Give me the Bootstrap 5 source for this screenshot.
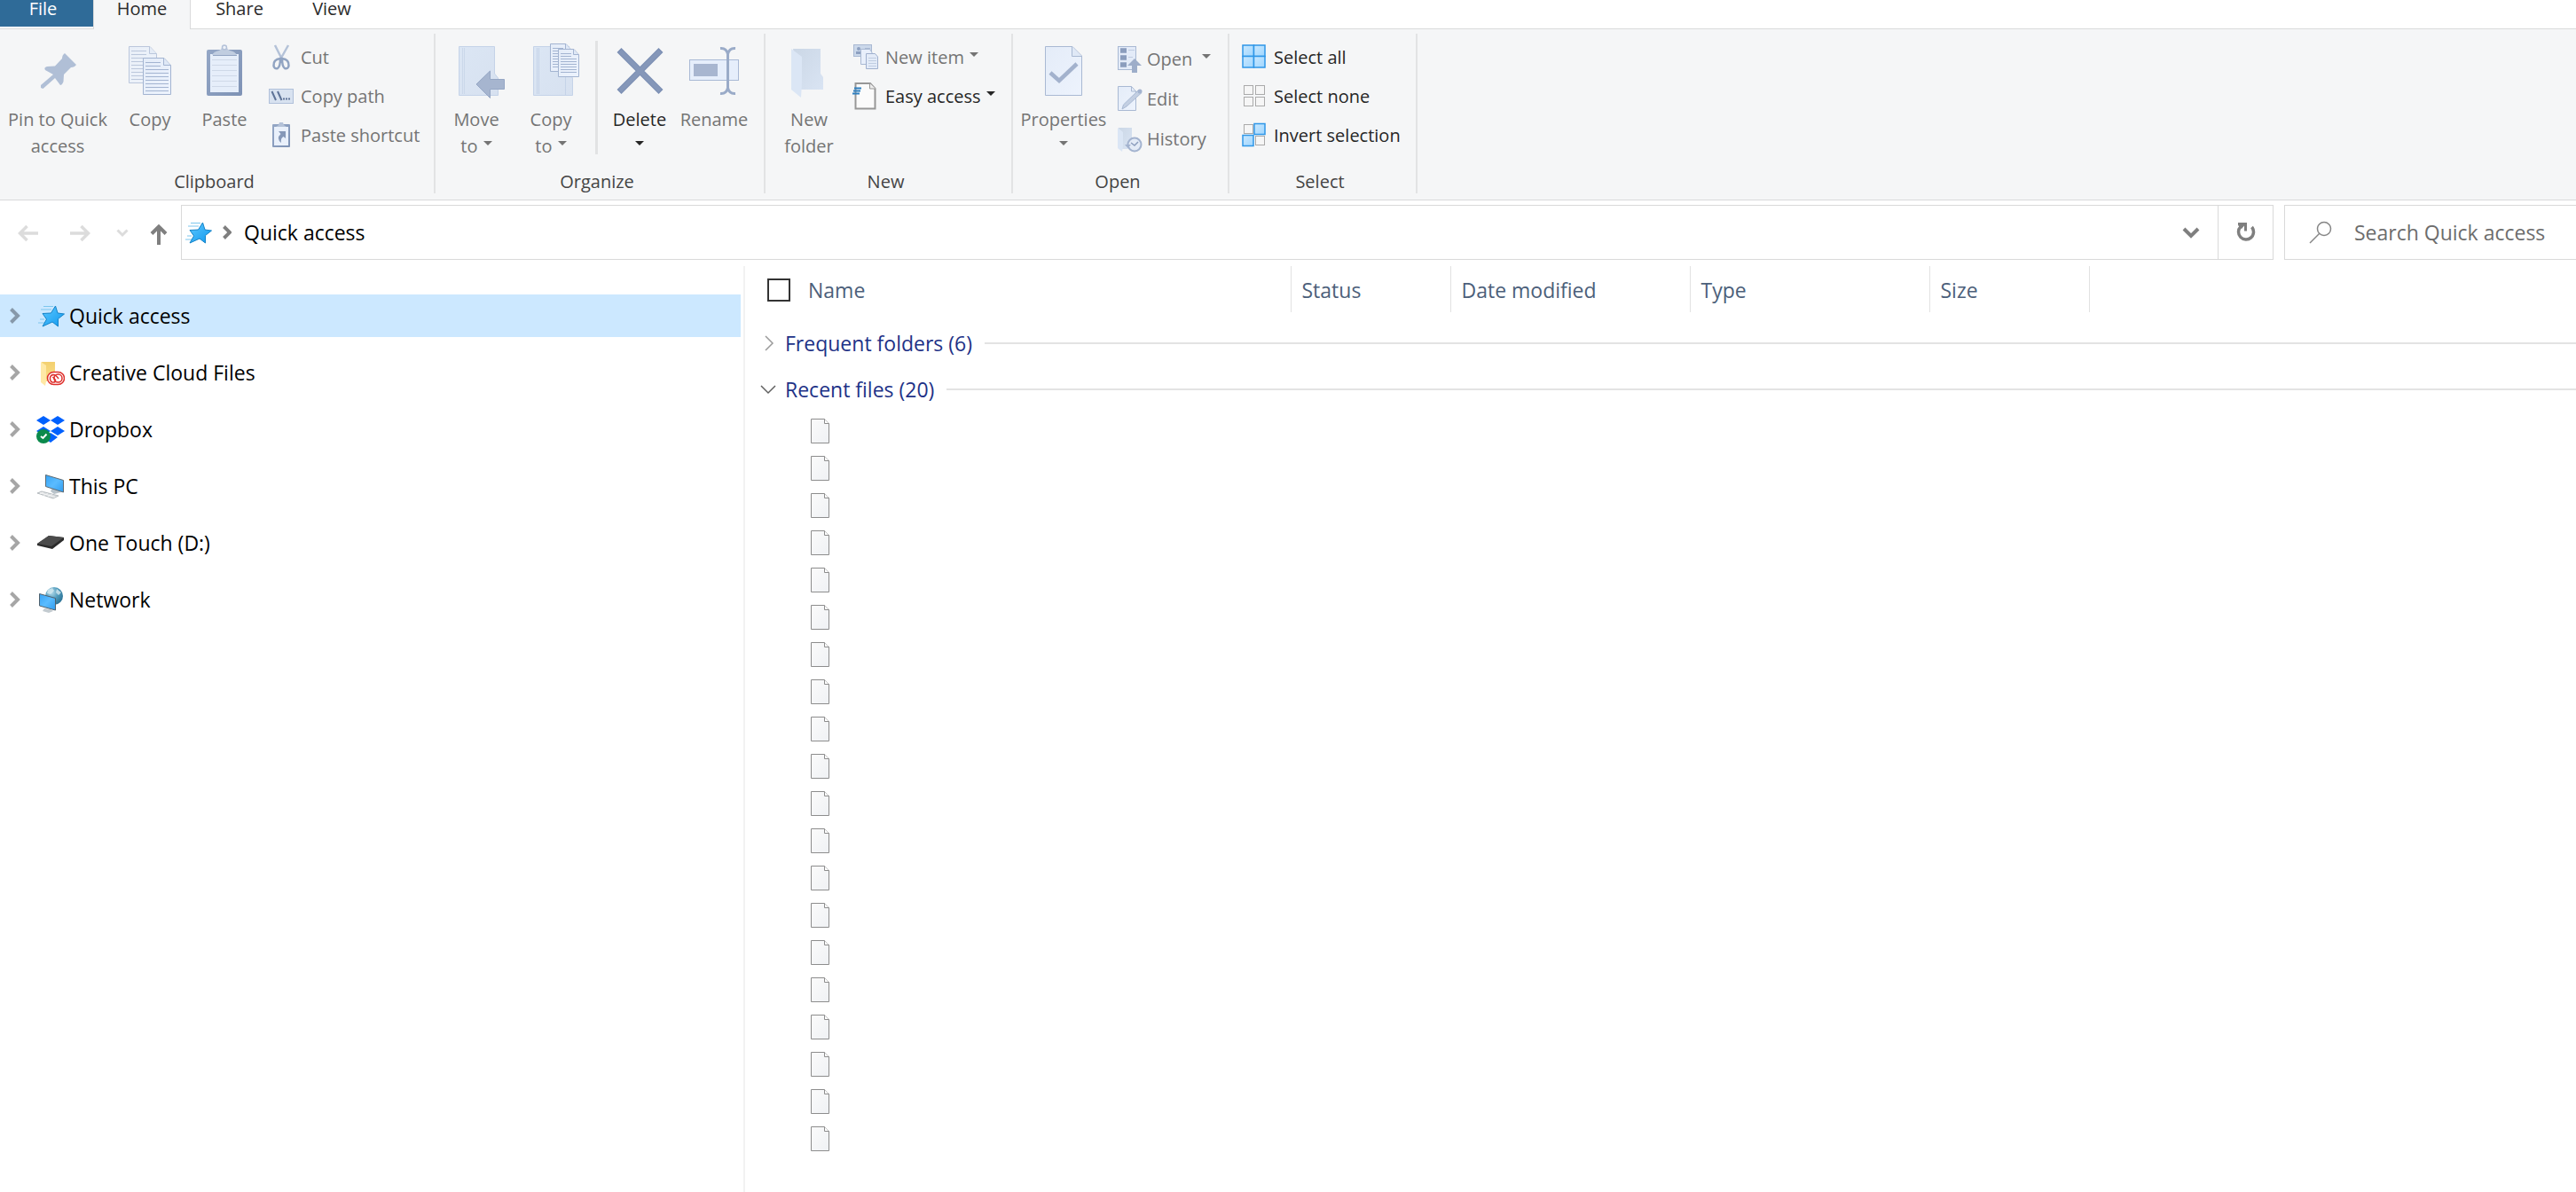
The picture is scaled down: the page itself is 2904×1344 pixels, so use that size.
<!DOCTYPE html>
<html lang="en">
<head>
<meta charset="utf-8">
<meta name="viewport" content="width=device-width, initial-scale=1">
<title>Quick access</title>
<link href="https://cdn.jsdelivr.net/npm/bootstrap@5.3.0/dist/css/bootstrap.min.css" rel="stylesheet">
<style>
  body { font-family: "Open Sans", "Noto Sans", sans-serif; font-size: 23px; line-height: 32px; color: #000; background: #fff; }
  svg { display: block; flex: none; }
  a { color: inherit; text-decoration: none; }

  /* Tabs */
  .tabs { height: 33px; font-size: 20px; border-bottom: 1px solid #d9dadb; }
  .tabs .nav-link { color: #2b2b2b; padding: 0; line-height: 20px; text-align: center; height: 33px; width: 112px; border: 0; border-radius: 0; }
  .tabs .file-tab { width: 105px; height: 30px; padding-right: 8px; background: #2f6b98; color: #fff; }
  .tabs .home-tab { width: 110px; background: #f5f6f7; border: solid #d9dadb; border-width: 0 1px; }
  .tabs .share-tab { width: 110px; }
  .tabs .view-tab { width: 98px; }

  /* Ribbon */
  .ribbon { background: #f5f6f7; border-bottom: 1px solid #d9dadb; height: 193px; font-size: 20px; }
  .rgroup { flex: none; margin: 5px 0 7px; border-right: 2px solid #e2e3e4; }
  .rgroup-name { color: #444; text-align: center; line-height: 26px; padding-right: 6px; }
  .g-clipboard { width: 491px; } .g-organize { width: 372px; } .g-new { width: 279px; } .g-open { width: 244px; } .g-select { width: 212px; }
  .tool { --bs-btn-disabled-opacity: 1; --bs-btn-disabled-color: #747474; --bs-btn-color: #262626; --bs-btn-padding-x: 0; --bs-btn-padding-y: 0; --bs-btn-font-size: 20px; --bs-btn-line-height: 30px; --bs-btn-border-width: 0; --bs-btn-border-radius: 0; }
  .tool-lg { display: flex; flex-direction: column; align-items: center; gap: 8px; padding-top: 10px; width: 84px; white-space: nowrap; }
  .tool-sm { display: flex; align-items: center; gap: 5px; height: 44px; text-align: left; white-space: nowrap; }
  .w-pin { width: 130px; } .w-copy { width: 78px; } .w-wide { width: 90px; } .w-prop { width: 106px; }
  .drop { display: inline-block; border: 5px solid transparent; border-top-color: currentColor; border-bottom: 0; vertical-align: 8px; margin-left: 1px; }
  .drop-far { margin-left: 6px; }
  .split { width: 3px; height: 128px; background: #e2e3e4; margin: 8px 5px 0 8px; }
  .stack { padding-top: 5px; }
  .stack-open { padding-top: 6px; }
  .stack-open .tool-sm { height: 45px; }
  .stack-select { padding-left: 13px; }

  /* Address row */
  .address-row { padding: 5px 0 7px; }
  .box { border: 1px solid #d9d9d9; height: 62px; }
  .arrows { width: 204px; padding-left: 16px; }
  .arrows .btn { --bs-btn-padding-x: 0; --bs-btn-padding-y: 0; --bs-btn-border-width: 0; --bs-btn-disabled-opacity: 1; }
  .crumbs { padding-left: 2px; gap: 8px; }
  .crumbs a { margin-left: 6px; }
  .reload { width: 62px; border-left: 1px solid #d9d9d9; border-radius: 0; }
  .search { width: 329px; margin-left: 12px; border-right: 0; padding-left: 26px; }
  .search input { font-size: 23px; color: #6d6d6d; padding: 0; border: 0; line-height: 32px; background: none; box-shadow: none; border-radius: 0; }
  .search input::placeholder { color: #6d6d6d; opacity: 1; }

  /* Folder tree */
  .tree { width: 840px; padding: 32px 3px 0 0; border-right: 2px solid #f2f2f2; }
  .tree a { height: 48px; margin-bottom: 16px; gap: 5px; }
  .tree a.picked { background: #cce8ff; }

  /* File list */
  .files { table-layout: fixed; width: 100%; }
  .files th { font-weight: 400; color: #4c607a; height: 52px; padding: 2px 12px 0; border-right: 1px solid #e2e2e2; vertical-align: middle; }
  .files th:last-child { border: 0; }
  .files th:first-child { padding-left: 25px; }
  .files .form-check-input { width: 26px; height: 26px; border: 2px solid #333; border-radius: 0; margin: 0 20px 0 0; }
  .c-name { width: 615px; } .c-short { width: 180px; } .c-long { width: 270px; }
  .files td { padding: 0; }
  .section-head { height: 52px; color: #1e3287; padding: 0 0 0 14px; border: 0; background: none; width: 100%; text-align: left; }
  .section-head::after { content: ""; flex: 1; height: 2px; background: #e3e3e3; margin-left: 14px; }
  .section-head svg { margin-right: 3px; }
  .first-section { padding-top: 9px !important; }
  .file-cell { height: 42px; padding-left: 74px !important; }
</style>
</head>
<body class="d-flex flex-column min-vh-100 overflow-x-hidden">

<svg width="0" height="0" class="position-absolute" aria-hidden="true">
  <defs>
    <linearGradient id="gPaper" x1="0" y1="0" x2="1" y2="1"><stop offset="0" stop-color="#e4ecf8"/><stop offset="1" stop-color="#edf3fd"/></linearGradient>
    <linearGradient id="gFold" x1="0" y1="0" x2="1" y2="1"><stop offset="0" stop-color="#dbe6f4"/><stop offset="1" stop-color="#d7e1f0"/></linearGradient>
    <linearGradient id="gBack" x1="0" y1="0" x2="1" y2="1"><stop offset="0" stop-color="#cbd7e6"/><stop offset="1" stop-color="#d9e4f3"/></linearGradient>
    <linearGradient id="gBoard" x1="0" y1="0" x2="1" y2="1"><stop offset="0" stop-color="#94a7c6"/><stop offset="1" stop-color="#7e92b5"/></linearGradient>
    <linearGradient id="gStar" x1="0" y1="0" x2="1" y2="1"><stop offset="0" stop-color="#5ec8ff"/><stop offset="1" stop-color="#0f98ee"/></linearGradient>
    <linearGradient id="gScreen" x1="0" y1="0" x2="1" y2="1"><stop offset="0" stop-color="#35a2f4"/><stop offset=".5" stop-color="#5bbcff"/><stop offset="1" stop-color="#2f9cf0"/></linearGradient>
    <linearGradient id="gFile" x1="0" y1="0" x2="1" y2="1"><stop offset="0" stop-color="#fbfbfb"/><stop offset="1" stop-color="#eff1f4"/></linearGradient>
    <radialGradient id="gGlobe" cx=".35" cy=".3" r=".8"><stop offset="0" stop-color="#b5dceb"/><stop offset=".5" stop-color="#4f9abb"/><stop offset="1" stop-color="#256b8e"/></radialGradient>
    <linearGradient id="gYellow" x1="0" y1="0" x2="0" y2="1"><stop offset="0" stop-color="#f3d06f"/><stop offset="1" stop-color="#fbdf87"/></linearGradient>
    <linearGradient id="gBlueBox" x1="0" y1="0" x2="1" y2="1"><stop offset="0" stop-color="#c9e8ff"/><stop offset="1" stop-color="#a0d6fe"/></linearGradient>
    <symbol id="star" viewBox="0 0 32 32">
      <path d="M8 5.500H19M5 9H17M4 20H9M2 24H9" stroke="#7cc6ee" stroke-width="1"/>
      <path d="M21.500 5 24 13 31.500 14 24.500 19.500 24.500 28 18 23 7 28 11.500 20 7 13.500 16.500 13Z" fill="url(#gStar)" stroke="#1483c8" stroke-width="1" stroke-linejoin="round"/>
    </symbol>
    <symbol id="chev" viewBox="0 0 14 20"><path d="M2.500 2.500 10 10 2.500 17.500" fill="none" stroke="currentColor" stroke-width="4"/></symbol>
    <symbol id="page" viewBox="0 0 22 30">
      <path d="M.5 1.500H15.500L20.500 6.500V28.500H.5Z" fill="url(#gFile)" stroke="#8d8d8d"/>
      <path d="M15.500 1.500V6.500H20.500" fill="#fff" stroke="#8d8d8d"/>
    </symbol>
    <symbol id="sheet" viewBox="0 0 32 42">
      <path d="M.5 .5H24L31.500 8.500V41.500H.5Z" fill="url(#gPaper)" stroke="#a3b4d1"/>
      <path d="M23.500 .5V8.500H31.500" fill="#dfe8f6" stroke="#a3b4d1"/>
      <path d="M3 5.500H20M3 9.500H20M3 13.500H29M3 17.500H29M3 21.500H29M3 25.500H29M3 29.500H29M3 33.500H29M3 37.500H29" stroke="#a3b4d1"/>
    </symbol>
    <symbol id="sheetSmall" viewBox="0 0 24 32">
      <path d="M.5 .5H18L23.500 6.500V31.500H.5Z" fill="url(#gPaper)" stroke="#a3b4d1"/>
      <path d="M17.500 .5V6.500H23.500" fill="#dfe8f6" stroke="#a3b4d1"/>
      <path d="M3 5.500H15M3 8.500H15M3 11.500H21M3 14.500H21M3 17.500H21M3 20.500H21M3 23.500H21M3 26.500H21" stroke="#a3b4d1"/>
    </symbol>
  </defs>
</svg>

<nav class="tabs nav flex-nowrap" aria-label="Ribbon tabs">
  <a class="nav-link file-tab" href="#">File</a>
  <a class="nav-link home-tab" href="#" aria-current="page">Home</a>
  <a class="nav-link share-tab" href="#">Share</a>
  <a class="nav-link view-tab" href="#">View</a>
</nav>

<div class="ribbon d-flex">
  <section class="rgroup g-clipboard d-flex flex-column justify-content-between">
    <div class="d-flex align-items-start">
      <button class="btn tool tool-lg w-pin" disabled>
        <svg width="64" height="64"><path d="M13 51V48L27 36 18 31Q16 28 20 27L29 26.500 37 18Q37 14 40 12L53 25Q51 28 47 28L39 36 38.500 44Q37 48 35 48L29 40 15.500 52Z" fill="#b0bfd6"/></svg>
        <span>Pin to Quick<br>access</span></button>
      <button class="btn tool tool-lg w-copy" disabled>
        <svg width="64" height="64"><g opacity=".7"><use href="#sheet" x="8" y="4" width="32" height="42"/></g><use href="#sheet" x="24" y="17" width="32" height="42"/></svg>
        <span>Copy</span></button>
      <button class="btn tool tool-lg w-wide" disabled>
        <svg width="64" height="64"><rect x="12" y="8" width="40" height="52" rx="2" fill="url(#gBoard)"/><rect x="16" y="13" width="32" height="43" fill="#e6eefa"/><path d="M18 19.500H46M18 25.500H46M18 31.500H46M18 37.500H46M18 43.500H46M18 49.500H46" stroke="#cfd9e8"/><path d="M18 14Q20 10 26 9 28 8 29 6H35Q36 8 38 9 44 10 46 14Z" fill="#c0cde0"/><path d="M19 14.500H46" stroke="#93a5c3"/><circle cx="32" cy="5.500" r="2.500" fill="#eef2f9" stroke="#b3c1d8" stroke-width="1.500"/></svg>
        <span>Paste</span></button>
      <div class="stack ps-1">
        <button class="btn tool tool-sm" disabled>
          <svg width="32" height="32"><path d="M8 2 16 18M23 2 14 18" stroke="#b4c2d8" stroke-width="2.500"/><path d="M14 17Q6 18 6.500 25 7 29 11 28 14 26 14 17ZM16 17Q24 18 23.500 25 23 29 19 28 16 26 16 17Z" fill="none" stroke="#91a4c2" stroke-width="2.500"/></svg>
          <span>Cut</span></button>
        <button class="btn tool tool-sm" disabled>
          <svg width="32" height="32"><rect x="1.500" y="7.500" width="27" height="16" fill="#d8e2f0" stroke="#b0c0da"/><path d="M4.500 10 9 20M11 10 15.500 20" stroke="#5e7397" stroke-width="2"/><path d="M17 18.500H25" stroke="#5e7397" stroke-width="2" stroke-dasharray="2 1"/></svg>
          <span>Copy path</span></button>
        <button class="btn tool tool-sm" disabled>
          <svg width="32" height="32"><rect x="5" y="3" width="20" height="26" rx="1" fill="url(#gBoard)"/><rect x="7" y="6" width="16" height="21" fill="#e9f0fb"/><path d="M9 6 12 4 13 1H17L18 4 21 6Z" fill="#b4c2d8"/><path d="M12 11H20V19L17.500 17Q14 19 15 24 9 19 14.500 14Z" fill="#8698b8"/></svg>
          <span>Paste shortcut</span></button>
      </div>
    </div>
    <div class="rgroup-name">Clipboard</div>
  </section>

  <section class="rgroup g-organize d-flex flex-column justify-content-between">
    <div class="d-flex align-items-start ps-1">
      <button class="btn tool tool-lg" disabled>
        <svg width="64" height="64"><path d="M12.500 4.500H52.500V35L56.500 40V59.500H12.500Z" fill="url(#gFold)" stroke="#c5d3e8"/><path d="M16.500 6V58M18.500 6V58" stroke="#cbd8ea"/><path d="M32 47 47.500 32V41.500H63.500V52.500H47.500V62.500Z" fill="#a6b5cf" stroke="#95a6c4"/></svg>
        <span>Move<br>to <span class="drop"></span></span></button>
      <button class="btn tool tool-lg" disabled>
        <svg width="64" height="64"><path d="M12.500 4.500H52.500V35L56.500 40V59.500H12.500Z" fill="url(#gFold)" stroke="#c5d3e8"/><path d="M16.500 6V58M18.500 6V58M48.500 38V59" stroke="#c5d3e8"/><use href="#sheetSmall" x="31" y="1" width="24" height="32"/><use href="#sheetSmall" x="40" y="7" width="24" height="32"/></svg>
        <span>Copy<br>to <span class="drop"></span></span></button>
      <div class="split"></div>
      <button class="btn tool tool-lg">
        <svg width="64" height="64"><path d="M9 8.500 56 55.500M56 8.500 9 55.500" stroke="#7b8fb4" stroke-width="7"/><path d="M10 9.500 55 54.500M55 9.500 10 54.500" stroke="#8597b9" stroke-width="5"/></svg>
        <span>Delete<br><span class="drop m-0"></span></span></button>
      <button class="btn tool tool-lg" disabled>
        <svg width="64" height="64"><rect x="4.500" y="19.500" width="55" height="23" fill="#e6eefb" stroke="#a9b9d5"/><rect x="9" y="24" width="27" height="14" fill="#a8b6d0"/><path d="M39 6.500Q46 6 47.500 13 49 6 56 6.500M47.500 12V52M39 57.500Q46 58 47.500 51 49 58 56 57.500" fill="none" stroke="#9aabc8" stroke-width="3"/></svg>
        <span>Rename</span></button>
    </div>
    <div class="rgroup-name">Organize</div>
  </section>

  <section class="rgroup g-new d-flex flex-column justify-content-between">
    <div class="d-flex align-items-start ps-1">
      <button class="btn tool tool-lg w-wide" disabled>
        <svg width="64" height="64"><path d="M14 7H45V35L48 39V53H22Z" fill="url(#gBack)"/><path d="M12 7 24 16V46L23 62 12 53Z" fill="#dbe6f5"/></svg>
        <span>New<br>folder</span></button>
      <div class="stack ps-1">
        <button class="btn tool tool-sm" disabled>
          <svg width="32" height="32"><rect x="1.500" y="1.500" width="20" height="13" fill="#cbd8ea" stroke="#a9b9d3"/><circle cx="7" cy="6" r="2" fill="#8da0c0"/><rect x="4" y="9" width="6" height="3" fill="#8da0c0"/><path d="M14 5.500H20" stroke="#a9b9d3"/><path d="M9.500 6.500H19.500L22 10V23.500H9.500Z" fill="#e8effb" stroke="#a9b9d3"/><path d="M15.500 11.500H25.500L28.500 15V28.500H15.500Z" fill="#e3ebf8" stroke="#a0b0ce"/><path d="M18 16.500H27M18 19.500H27M18 22.500H27M18 25.500H27" stroke="#c0cde1"/></svg>
          <span>New item <span class="drop"></span></span></button>
        <button class="btn tool tool-sm">
          <svg width="32" height="32"><path d="M3.500 1H20L25.500 7V29.500H3.500Z" fill="#fbfbfb" stroke="#979797" stroke-width="2"/><path d="M19.500 1V7H26" fill="#eee" stroke="#979797"/><path d="M2 6.500H10M1 9.500H9M0 12.500H8" stroke="#2d7fc0" stroke-width="2"/></svg>
          <span>Easy access <span class="drop"></span></span></button>
      </div>
    </div>
    <div class="rgroup-name">New</div>
  </section>

  <section class="rgroup g-open d-flex flex-column justify-content-between">
    <div class="d-flex align-items-start ps-1">
      <button class="btn tool tool-lg w-prop" disabled>
        <svg width="64" height="64"><path d="M11.500 4.500H42L52.500 15V59.500H11.500Z" fill="url(#gPaper)" stroke="#a9b9d3"/><path d="M41.500 4.500V15.500H52.500" fill="#dfe8f6" stroke="#a9b9d3"/><path d="M17 34 27 43 47 24" fill="none" stroke="#a3b2cd" stroke-width="4.500"/></svg>
        <span>Properties<br><span class="drop m-0"></span></span></button>
      <div class="stack-open ps-1">
        <button class="btn tool tool-sm" disabled>
          <svg width="32" height="32"><rect x="4.500" y="1.500" width="20" height="26" fill="#e3ebf8" stroke="#a9b9d3"/><path d="M7 6H14M7 14H14M7 22H14" stroke="#8b9dbd" stroke-width="5.500"/><path d="M16 5.500H23M16 13.500H21" stroke="#c0cde1"/><path d="M23 15 31 23H26V31H20V23H15Z" fill="#9dadc9"/></svg>
          <span>Open <span class="drop drop-far"></span></span></button>
        <button class="btn tool tool-sm" disabled>
          <svg width="32" height="32"><path d="M4.500 1.500H19.500L24.500 7V28.500H4.500Z" fill="url(#gPaper)" stroke="#a9b9d3"/><path d="M19.500 1.500V7H24.500" fill="none" stroke="#a9b9d3"/><path d="M9 27 10.500 22 27 6 31 8.500 14 24Z" fill="#c3cfe2" stroke="#a9b9d3"/><circle cx="29" cy="7" r="2.500" fill="#a3b3cf"/></svg>
          <span>Edit</span></button>
        <button class="btn tool tool-sm" disabled>
          <svg width="32" height="32"><path d="M5 3H20V27H9Z" fill="url(#gBack)"/><path d="M4 3 10 8V24L9 30 4 26Z" fill="#dbe6f5"/><circle cx="23" cy="22" r="7.500" fill="#e3ebf7" stroke="#a3b3cf" stroke-width="2"/><path d="M19 20 23 23 27 19" fill="none" stroke="#8b9dbd" stroke-width="1.500"/><path d="M12 22H19L15.500 26Z" fill="#a3b3cf"/></svg>
          <span>History</span></button>
      </div>
    </div>
    <div class="rgroup-name">Open</div>
  </section>

  <section class="rgroup g-select d-flex flex-column justify-content-between">
    <div class="stack stack-select">
        <button class="btn tool tool-sm">
          <svg width="32" height="32"><g fill="url(#gBlueBox)" stroke="#2f97e8" stroke-width="1.500"><rect x="2" y="2" width="12.500" height="12.500"/><rect x="14.500" y="2" width="12.500" height="12.500"/><rect x="2" y="14.500" width="12.500" height="12.500"/><rect x="14.500" y="14.500" width="12.500" height="12.500"/></g></svg>
          <span>Select all</span></button>
        <button class="btn tool tool-sm">
          <svg width="32" height="32"><g fill="#f6f6f6" stroke="#aaa"><rect x="3.500" y="3.500" width="10" height="10"/><rect x="16.500" y="3.500" width="10" height="10"/><rect x="3.500" y="16.500" width="10" height="10"/><rect x="16.500" y="16.500" width="10" height="10"/></g></svg>
          <span>Select none</span></button>
        <button class="btn tool tool-sm">
          <svg width="32" height="32"><g fill="#f6f6f6" stroke="#aaa"><rect x="3.500" y="3.500" width="10" height="10"/><rect x="16.500" y="16.500" width="10" height="10"/></g><g fill="url(#gBlueBox)" stroke="#2f97e8" stroke-width="1.500"><rect x="15" y="2.500" width="12" height="12"/><rect x="2" y="15.500" width="12" height="12"/></g></svg>
          <span>Invert selection</span></button>
    </div>
    <div class="rgroup-name">Select</div>
  </section>
</div>

<div class="address-row d-flex">
  <div class="arrows d-flex align-items-center flex-shrink-0">
    <button class="btn" aria-label="Back" disabled><svg width="32" height="32"><path d="M27 17H7M14.500 9 6.500 17 14.500 25" fill="none" stroke="#dcdcdc" stroke-width="3.500"/></svg></button>
    <button class="btn ms-4" aria-label="Forward" disabled><svg width="36" height="32"><path d="M7 17H27M19.500 9 27.500 17 19.500 25" fill="none" stroke="#dcdcdc" stroke-width="3.500"/></svg></button>
    <button class="btn ms-3" aria-label="Recent locations" disabled><svg width="28" height="32"><path d="M8.500 13.500 14 19 19.500 13.500" fill="none" stroke="#dcdcdc" stroke-width="3"/></svg></button>
    <button class="btn ms-2" aria-label="Up"><svg width="36" height="32"><path d="M19 30V10M11 17.500 19 9.500 27 17.500" fill="none" stroke="#7f7f7f" stroke-width="4"/></svg></button>
  </div>
  <div class="box d-flex flex-grow-1">
    <nav class="crumbs d-flex align-items-center flex-grow-1" aria-label="Address">
      <svg width="32" height="32"><use href="#star"/></svg>
      <svg width="14" height="18" viewBox="0 0 14 18"><path d="M5.500 2.500 12 9 5.500 15.500" fill="none" stroke="#7f7f7f" stroke-width="4"/></svg>
      <a href="#">Quick access</a>
    </nav>
    <button class="btn p-0 border-0 px-3" aria-label="Previous locations"><svg width="28" height="20"><path d="M6 6 14 14 22 6" fill="none" stroke="#7f7f7f" stroke-width="4"/></svg></button>
    <button class="btn reload p-0 border-top-0 border-bottom-0 border-end-0" aria-label="Refresh"><svg class="mx-auto" width="24" height="26"><path d="M18.500 7A8.500 8.500 0 1 1 6 6.500" fill="none" stroke="#7f7f7f" stroke-width="3.500"/><path d="M3 2H13V11.500H10V5.500L7 9 3 5Z" fill="#7f7f7f"/></svg></button>
  </div>
  <div class="box search d-flex align-items-center flex-shrink-0">
    <svg width="28" height="28"><circle cx="18" cy="10" r="7.500" fill="none" stroke="#858585" stroke-width="1.500"/><path d="M12.500 15.500 2 26" stroke="#858585" stroke-width="1.500"/></svg>
    <input class="form-control ms-4" type="text" placeholder="Search Quick access" aria-label="Search Quick access">
  </div>
</div>

<main class="d-flex flex-grow-1">
  <nav class="tree flex-shrink-0" aria-label="Folders">
    <a class="picked d-flex align-items-center" href="#"><svg width="36" height="20"><use href="#chev" x="10" width="14" height="20" color="#8799aa"/></svg><svg width="32" height="32"><use href="#star"/></svg>Quick access</a>
    <a class="d-flex align-items-center" href="#"><svg width="36" height="20"><use href="#chev" x="10" width="14" height="20" color="#a6a6a6"/></svg><svg width="32" height="32"><path d="M6 4H21V26H11Z" fill="url(#gYellow)"/><path d="M5 4 11 8V26L10 31 5 27Z" fill="#ffe9a6"/><rect x="12" y="15" width="20" height="15" rx="7.500" fill="#fff"/><g fill="none" stroke="#de2f2b" stroke-width="1.500"><rect x="12.500" y="15.500" width="19" height="14" rx="7"/><circle cx="24.500" cy="22.500" r="4.500"/><path d="M22 26Q17 29 15.500 24 15 19 19 18.500 22 18.500 25 23M18.500 21 22 25"/></g></svg>Creative Cloud Files</a>
    <a class="d-flex align-items-center" href="#"><svg width="36" height="20"><use href="#chev" x="10" width="14" height="20" color="#a6a6a6"/></svg><svg width="32" height="32"><path d="M8 1 16 6 8 11 0 6ZM24 1 32 6 24 11 16 6ZM8 13 16 18 8 23 0 18ZM24 13 32 18 24 23 16 18ZM16 20 24 25 16 31 8 25Z" fill="#0061fe"/><circle cx="8" cy="24" r="8" fill="#0b8a4b"/><path d="M5 24 7.500 26 11.500 21.500" fill="none" stroke="#fff" stroke-width="2"/></svg>Dropbox</a>
    <a class="d-flex align-items-center" href="#"><svg width="36" height="20"><use href="#chev" x="10" width="14" height="20" color="#a6a6a6"/></svg><svg width="32" height="32"><path d="M18 18 26 20 28 23 20 25 16 22Z" fill="#b9c3ca"/><path d="M10.500 3.500 30.500 9.500V23L10.500 16.500Z" fill="url(#gScreen)" stroke="#5d6a73"/><path d="M1 24 6 22 25 27 19 30Z" fill="#d9dde0" stroke="#abb1b5" stroke-width=".8"/><path d="M4 23.500 21 28.500M8 23 4 25M13 24.500 8 26.500M18 25.500 13 28" stroke="#f6f6f6" stroke-width=".8"/></svg>This PC</a>
    <a class="d-flex align-items-center" href="#"><svg width="36" height="20"><use href="#chev" x="10" width="14" height="20" color="#a6a6a6"/></svg><svg width="32" height="32"><path d="M1 17 14 8 31 10V13L18 23 1 19Z" fill="#2b2b2b"/><path d="M1 17 14 8 31 10 17 20Z" fill="#4b4b4b"/></svg>One Touch (D:)</a>
    <a class="d-flex align-items-center" href="#"><svg width="36" height="20"><use href="#chev" x="10" width="14" height="20" color="#a6a6a6"/></svg><svg width="32" height="32"><circle cx="20" cy="12" r="10" fill="url(#gGlobe)"/><path d="M13 5 18 3 20 6 16 10 12 9ZM23 4 28 8 25 11 22 8Z" fill="#d5e9f0" opacity=".8"/><path d="M9 26 16 27 19 29 14 31 7 29Z" fill="#c3cbd0"/><path d="M3.500 9.500 21.500 14.500V28L3.500 23Z" fill="url(#gScreen)" stroke="#50606c"/></svg>Network</a>
  </nav>

  <div class="flex-grow-1">
    <table class="files">
      <colgroup><col class="c-name"><col class="c-short"><col class="c-long"><col class="c-long"><col class="c-short"><col></colgroup>
      <thead>
        <tr>
          <th scope="col"><div class="d-flex align-items-center"><input class="form-check-input" type="checkbox" id="pickAll"><label for="pickAll">Name</label></div></th>
          <th scope="col">Status</th><th scope="col">Date modified</th><th scope="col">Type</th><th scope="col">Size</th><th></th>
        </tr>
      </thead>
      <tbody>
        <tr><td class="first-section" colspan="6"><button class="section-head d-flex align-items-center"><svg width="28" height="20"><path d="M9 2 17 10 9 18" fill="none" stroke="#9a9a9a" stroke-width="1.500"/></svg>Frequent folders (6)</button></td></tr>
        <tr><td colspan="6"><button class="section-head d-flex align-items-center"><svg width="28" height="20"><path d="M4 6 12 14 20 6" fill="none" stroke="#606060" stroke-width="1.500"/></svg>Recent files (20)</button></td></tr>
      </tbody>
      <tbody id="recent"></tbody>
    </table>
  </div>
</main>

<script src="https://cdn.jsdelivr.net/npm/bootstrap@5.3.0/dist/js/bootstrap.bundle.min.js"></script>
<script>
  // One row per recent file; every row starts with the blank page icon.
  const row = '<tr><td class="file-cell" colspan="6"><svg width="22" height="30"><use href="#page"/></svg></td></tr>';
  document.getElementById('recent').innerHTML = row.repeat(20);
</script>
</body>
</html>
